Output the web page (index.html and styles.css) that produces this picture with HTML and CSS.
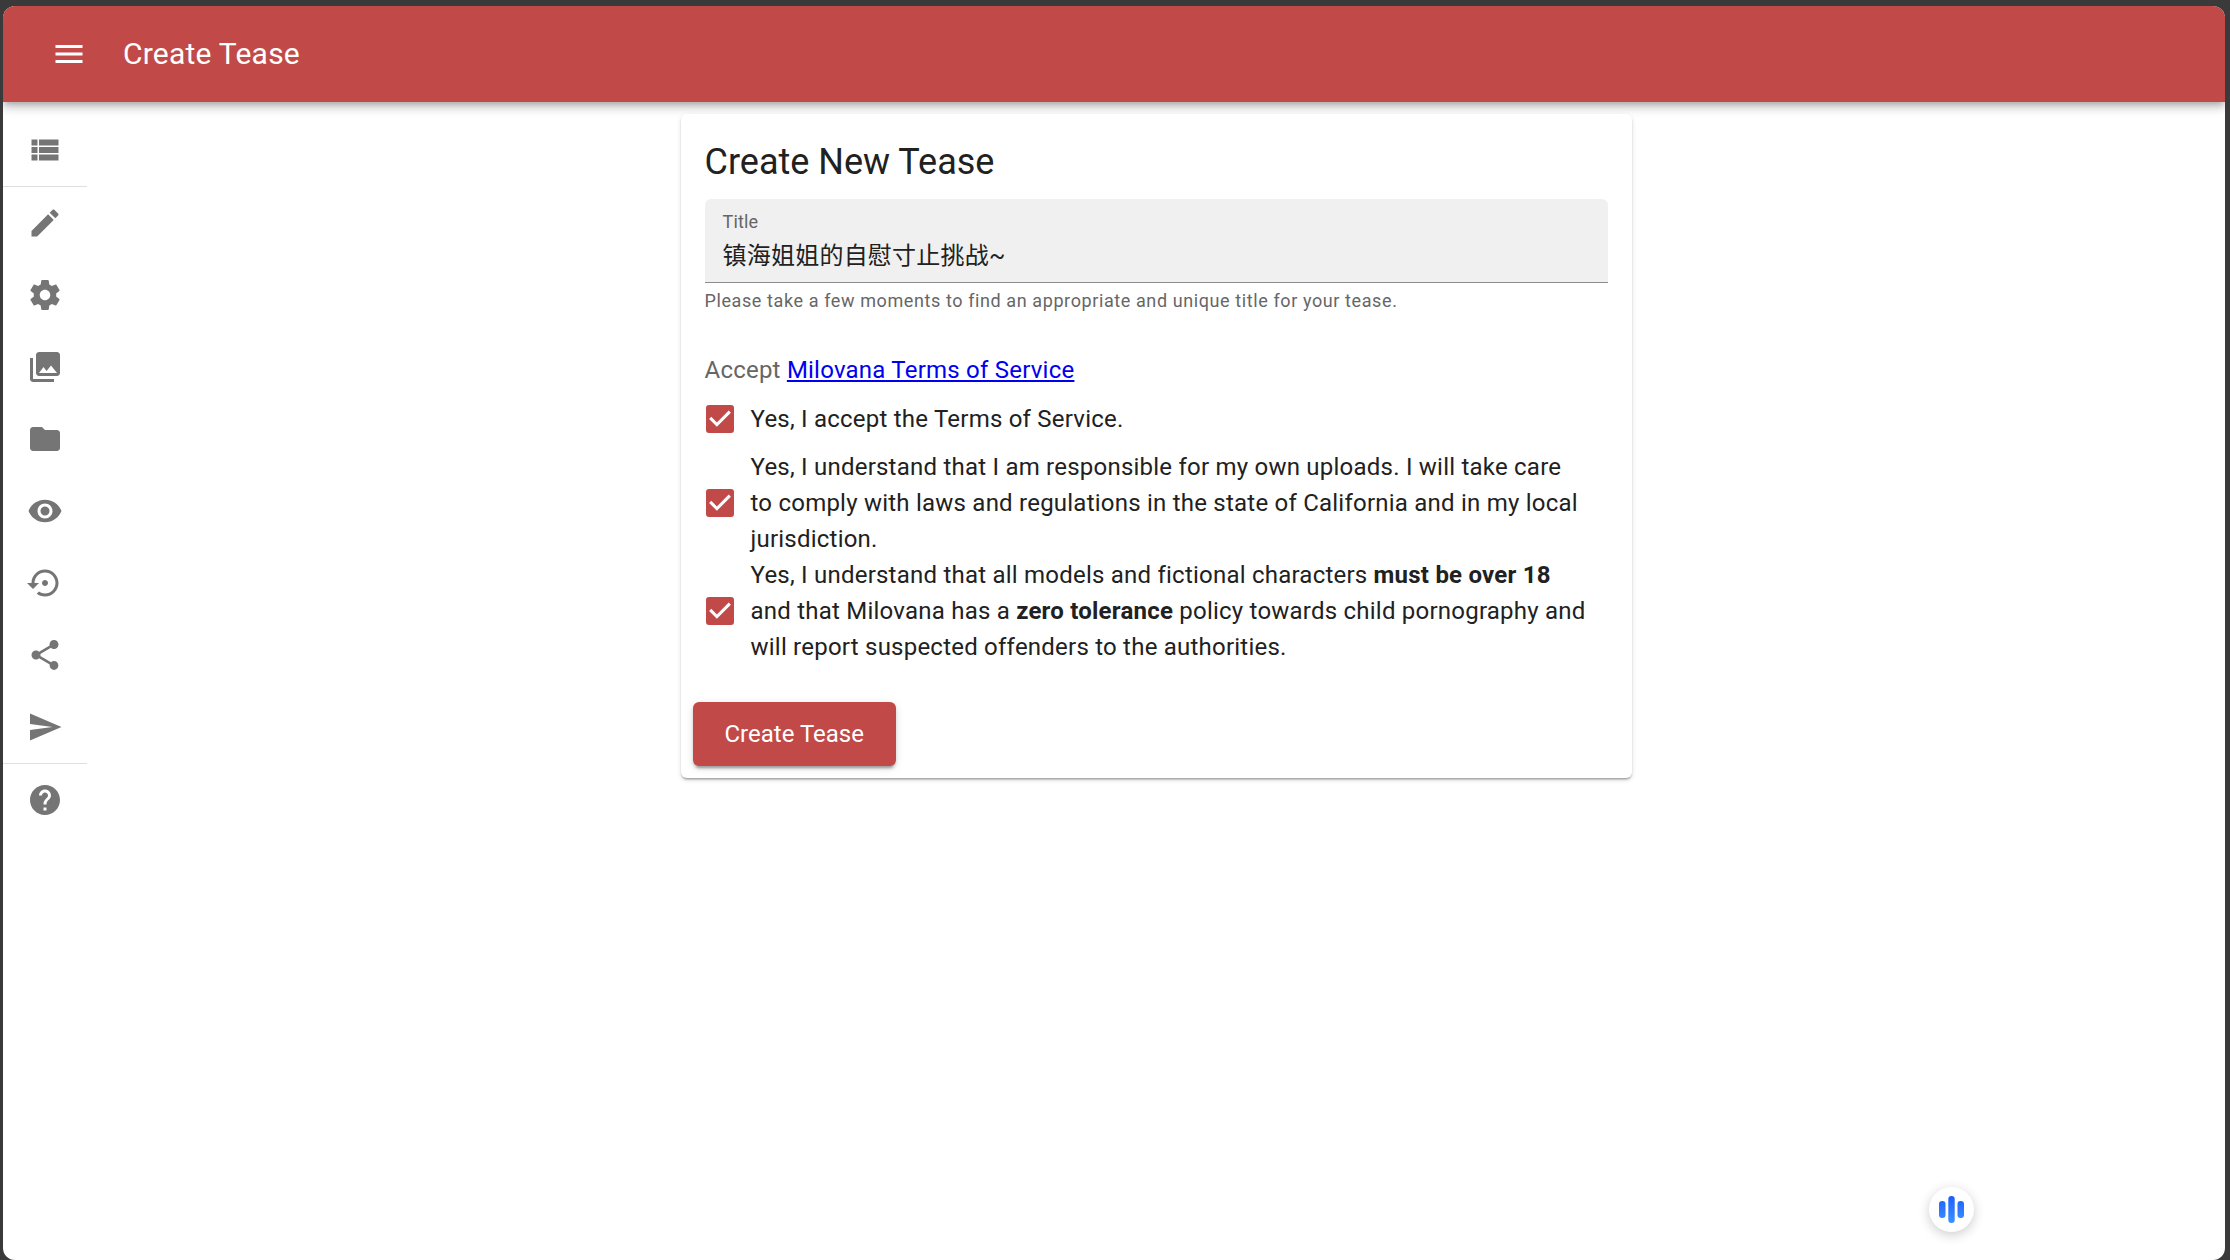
FILE: index.html
```html
<!DOCTYPE html>
<html lang="en">
<head>
<meta charset="utf-8">
<title>Create Tease</title>
<link rel="stylesheet" href="styles.css">
</head>
<body>
<div class="app">
  <header class="topbar">
    <button class="menu-button" type="button" aria-label="Menu">
      <svg class="icon" viewBox="0 0 24 24"><path d="M3 18h18v-2H3v2zm0-5h18v-2H3v2zm0-7v2h18V6H3z"/></svg>
    </button>
    <span class="topbar-title">Create Tease</span>
  </header>
  <div class="body">
    <nav class="rail">
      <a class="rail-item" href="#teases" aria-label="Teases"><svg class="icon" viewBox="0 0 24 24"><path d="M3 14h4v-4H3v4zm0 5h4v-4H3v4zM3 9h4V5H3v4zm5 5h13v-4H8v4zm0 5h13v-4H8v4zM8 5v4h13V5H8z"/></svg></a>
      <hr class="rail-divider">
      <a class="rail-item" href="#edit" aria-label="Edit"><svg class="icon" viewBox="0 0 24 24"><path d="M3 17.25V21h3.75L17.81 9.94l-3.75-3.75L3 17.25zM20.71 7.04c.39-.39.39-1.02 0-1.41l-2.34-2.34c-.39-.39-1.02-.39-1.41 0l-1.83 1.83 3.75 3.75 1.83-1.83z"/></svg></a>
      <a class="rail-item" href="#settings" aria-label="Settings"><svg class="icon" viewBox="0 0 24 24"><path d="M19.43 12.98c.04-.32.07-.64.07-.98s-.03-.66-.07-.98l2.110-1.650c.19-.15.24-.42.12-.64l-2-3.460c-.12-.22-.39-.3-.61-.22l-2.490 1c-.52-.4-1.080-.73-1.690-.98l-.38-2.650C14.460 2.180 14.250 2 14 2h-4c-.25 0-.46.18-.49.42l-.38 2.650c-.61.25-1.170.59-1.690.98l-2.490-1c-.23-.09-.49 0-.61.22l-2 3.460c-.13.22-.07.49.12.64l2.110 1.650c-.04.32-.07.65-.07.98s.03.66.07.98l-2.110 1.650c-.19.15-.24.42-.12.64l2 3.460c.12.22.39.3.61.22l2.490-1c.52.4 1.080.73 1.690.98l.38 2.650c.03.24.24.42.49.42h4c.25 0 .46-.18.49-.42l.38-2.650c.61-.25 1.170-.59 1.690-.98l2.490 1c.23.09.49 0 .61-.22l2-3.460c.12-.22.07-.49-.12-.64l-2.110-1.650zM12 15.500c-1.930 0-3.500-1.570-3.500-3.500s1.570-3.500 3.500-3.500 3.500 1.570 3.500 3.500-1.570 3.500-3.500 3.500z"/></svg></a>
      <a class="rail-item" href="#images" aria-label="Images"><svg class="icon" viewBox="0 0 24 24"><path d="M22 16V4c0-1.100-.9-2-2-2H8c-1.100 0-2 .9-2 2v12c0 1.100.9 2 2 2h12c1.100 0 2-.9 2-2zm-11-4l2.030 2.710L16 11l4 5H8l3-4zM2 6v14c0 1.100.9 2 2 2h14v-2H4V6H2z"/></svg></a>
      <a class="rail-item" href="#files" aria-label="Files"><svg class="icon" viewBox="0 0 24 24"><path d="M10 4H4c-1.100 0-1.990.9-1.990 2L2 18c0 1.100.9 2 2 2h16c1.100 0 2-.9 2-2V8c0-1.100-.9-2-2-2h-8l-2-2z"/></svg></a>
      <a class="rail-item" href="#preview" aria-label="Preview"><svg class="icon" viewBox="0 0 24 24"><path d="M12 4.500C7 4.500 2.730 7.610 1 12c1.730 4.390 6 7.500 11 7.500s9.270-3.110 11-7.500c-1.730-4.390-6-7.500-11-7.500zM12 17c-2.760 0-5-2.240-5-5s2.240-5 5-5 5 2.240 5 5-2.240 5-5 5zm0-8c-1.660 0-3 1.340-3 3s1.340 3 3 3 3-1.340 3-3-1.340-3-3-3z"/></svg></a>
      <a class="rail-item" href="#history" aria-label="History"><svg class="icon" viewBox="0 0 24 24"><path d="M14 12c0-1.100-.9-2-2-2s-2 .9-2 2 .9 2 2 2 2-.9 2-2zm-2-9c-4.970 0-9 4.030-9 9H0l4 4 4-4H5c0-3.870 3.130-7 7-7s7 3.130 7 7-3.130 7-7 7c-1.510 0-2.910-.49-4.060-1.300l-1.420 1.440C8.040 20.300 9.940 21 12 21c4.970 0 9-4.030 9-9s-4.030-9-9-9z"/></svg></a>
      <a class="rail-item" href="#share" aria-label="Share"><svg class="icon" viewBox="0 0 24 24"><path d="M18 16.080c-.76 0-1.440.3-1.960.77L8.910 12.700c.05-.23.09-.46.09-.7s-.04-.47-.09-.7l7.050-4.110c.54.5 1.250.81 2.040.81 1.660 0 3-1.340 3-3s-1.340-3-3-3-3 1.340-3 3c0 .24.04.47.09.7L8.040 9.810C7.500 9.310 6.790 9 6 9c-1.660 0-3 1.340-3 3s1.340 3 3 3c.79 0 1.500-.31 2.040-.81l7.120 4.160c-.05.21-.08.43-.08.65 0 1.610 1.310 2.920 2.920 2.920s2.920-1.310 2.920-2.920-1.310-2.920-2.920-2.920z"/></svg></a>
      <a class="rail-item" href="#publish" aria-label="Publish"><svg class="icon" viewBox="0 0 24 24"><path d="M2.010 21L23 12 2.010 3 2 10l15 2-15 2z"/></svg></a>
      <hr class="rail-divider">
      <a class="rail-item" href="#help" aria-label="Help"><svg class="icon" viewBox="0 0 24 24"><path d="M12 2C6.480 2 2 6.480 2 12s4.480 10 10 10 10-4.480 10-10S17.520 2 12 2zm1 17h-2v-2h2v2zm2.070-7.750l-.9.920C13.450 12.900 13 13.500 13 15h-2v-.5c0-1.100.45-2.100 1.170-2.830l1.240-1.260c.37-.36.59-.86.59-1.410 0-1.100-.9-2-2-2s-2 .9-2 2H8c0-2.210 1.790-4 4-4s4 1.790 4 4c0 .88-.36 1.680-.93 2.250z"/></svg></a>
    </nav>
    <main class="content">
      <form class="card">
        <div class="card-content">
          <h1 class="card-title">Create New Tease</h1>
          <div class="field">
            <label class="field-label" for="title">Title</label>
            <input class="field-input" id="title" type="text" value="镇海姐姐的自慰寸止挑战~" aria-describedby="title-help">
          </div>
          <p class="field-help" id="title-help">Please take a few moments to find an appropriate and unique title for your tease.</p>
          <p class="terms">Accept <a class="terms-link" href="#terms">Milovana Terms of Service</a></p>
          <label class="check-row">
            <span class="check"><input class="check-input" type="checkbox" checked><svg class="check-mark" viewBox="3 3 18 18"><path d="M10 17l-5-5 1.410-1.410L10 14.170l7.590-7.590L19 8l-9 9z"/></svg></span>
            <span class="check-text">Yes, I accept the Terms of Service.</span>
          </label>
          <label class="check-row">
            <span class="check"><input class="check-input" type="checkbox" checked><svg class="check-mark" viewBox="3 3 18 18"><path d="M10 17l-5-5 1.410-1.410L10 14.170l7.590-7.590L19 8l-9 9z"/></svg></span>
            <span class="check-text">Yes, I understand that I am responsible for my own uploads. I will take care to comply with laws and regulations in the state of California and in my local jurisdiction.</span>
          </label>
          <label class="check-row">
            <span class="check"><input class="check-input" type="checkbox" checked><svg class="check-mark" viewBox="3 3 18 18"><path d="M10 17l-5-5 1.410-1.410L10 14.170l7.590-7.590L19 8l-9 9z"/></svg></span>
            <span class="check-text">Yes, I understand that all models and fictional characters <b>must be over 18</b> and that Milovana has a <b>zero tolerance</b> policy towards child pornography and will report suspected offenders to the authorities.</span>
          </label>
        </div>
        <div class="card-actions">
          <button class="submit" type="button">Create Tease</button>
        </div>
      </form>
    </main>
  </div>
</div>
<button class="voice" type="button" aria-label="Voice">
  <svg class="voice-icon" viewBox="0 0 27 27">
    <defs><linearGradient id="bars" x1="0" y1="0" x2="0" y2="27" gradientUnits="userSpaceOnUse"><stop offset="0" stop-color="#1f5cff"/><stop offset="1" stop-color="#3a94ff"/></linearGradient></defs>
    <g fill="url(#bars)"><rect x="1" y="5" width="6.500" height="17" rx="3"/><rect x="10.300" y="0" width="6.400" height="27" rx="3"/><rect x="19.500" y="5" width="6.500" height="17" rx="3"/></g>
  </svg>
</button>
</body>
</html>
```
FILE: styles.css
```css
* {
  box-sizing: border-box;
}

body {
  margin: 0;
  min-height: 100vh;
  display: flex;
  padding: 6px 5px 0 3px;
  background: #3a3a3a;
  color: #212121;
  font-family: Roboto, "Noto Sans CJK SC", sans-serif;
  font-size: 24px;
  line-height: 36px;
}

.app {
  flex: 1;
  display: flex;
  flex-direction: column;
  background: #fff;
  border-radius: 12px;
  overflow: hidden;
}

.icon {
  display: block;
  width: 36px;
  height: 36px;
  fill: currentColor;
}

/* Top bar */
.topbar {
  display: flex;
  align-items: center;
  gap: 18px;
  height: 96px;
  padding: 0 30px;
  background: #c14a48;
  color: #fff;
  box-shadow: 0 3px 6px -2px rgba(0, 0, 0, .2), 0 6px 8px rgba(0, 0, 0, .14), 0 2px 15px rgba(0, 0, 0, .12);
}

.menu-button {
  padding: 18px;
  border: 0;
  background: none;
  color: inherit;
}

.topbar-title {
  font-size: 30px;
  line-height: 48px;
  letter-spacing: .0075em;
}

.body {
  flex: 1;
  display: flex;
}

/* Navigation rail */
.rail {
  flex: none;
  width: 84px;
  padding-top: 12px;
}

.rail-item {
  display: flex;
  justify-content: center;
  padding: 18px 0;
  color: #757575;
}

.rail-divider {
  margin: 0;
  border: 0;
  border-top: 1px solid #dfdfdf;
}

/* Form card */
.content {
  flex: 1;
  display: flex;
  align-items: flex-start;
  justify-content: center;
  padding: 12px;
}

.card {
  width: 100%;
  max-width: 951px;
  background: #fff;
  border-radius: 6px;
  box-shadow: 0 3px 2px -2px rgba(0, 0, 0, .2), 0 2px 2px rgba(0, 0, 0, .14), 0 2px 5px rgba(0, 0, 0, .12);
}

.card-content {
  padding: 24px;
}

.card-title {
  margin: 0 0 13px;
  font-size: 36px;
  font-weight: 400;
  line-height: 48px;
}

.field {
  display: flex;
  flex-direction: column;
  padding: 11px 18px 10px;
  background: #f0f0f0;
  border-bottom: 1px solid #8c8c8c;
  border-radius: 6px 6px 0 0;
}

.field-label {
  color: #666;
  font-size: 18px;
  line-height: 24px;
  letter-spacing: .0094em;
}

.field-input {
  width: 100%;
  height: 38px;
  padding: 0;
  border: 0;
  outline: 0;
  background: none;
  color: inherit;
  font: inherit;
  letter-spacing: .0094em;
}

.field-help {
  margin: 6px 0 39px;
  color: #666;
  font-size: 18px;
  line-height: 24px;
  letter-spacing: .0333em;
}

.terms {
  margin: 0 0 1px;
  color: #666;
  letter-spacing: .0094em;
}

.terms-link {
  color: #00e;
}

.check-row {
  display: flex;
  align-items: center;
  gap: 16px;
  min-height: 60px;
  padding-right: 21px;
}

.check {
  flex: none;
  display: grid;
  place-items: center;
  width: 30px;
}

.check-input,
.check-mark {
  grid-area: 1 / 1;
  margin: 0;
}

.check-input {
  appearance: none;
  width: 28px;
  height: 28px;
  border-radius: 3px;
  background: #c14a48;
}

.check-mark {
  width: 28px;
  height: 28px;
  fill: #fff;
  pointer-events: none;
}

.check-text {
  letter-spacing: .0094em;
}

.card-actions {
  padding: 13px 12px 12px;
}

.submit {
  display: block;
  height: 64px;
  padding: 0 32px;
  border: 0;
  border-radius: 6px;
  background: #c14a48;
  color: #fff;
  font: inherit;
  box-shadow: 0 5px 2px -3px rgba(0, 0, 0, .2), 0 3px 3px rgba(0, 0, 0, .14), 0 2px 8px rgba(0, 0, 0, .12);
}

/* Floating voice button over the page */
.voice {
  position: fixed;
  right: 256px;
  bottom: 28px;
  display: grid;
  place-items: center;
  width: 45px;
  height: 45px;
  padding: 0;
  border: 0;
  border-radius: 50%;
  background: #fff;
  box-shadow: 0 3px 12px rgba(0, 0, 0, .2);
}

.voice-icon {
  width: 27px;
  height: 27px;
}
```
